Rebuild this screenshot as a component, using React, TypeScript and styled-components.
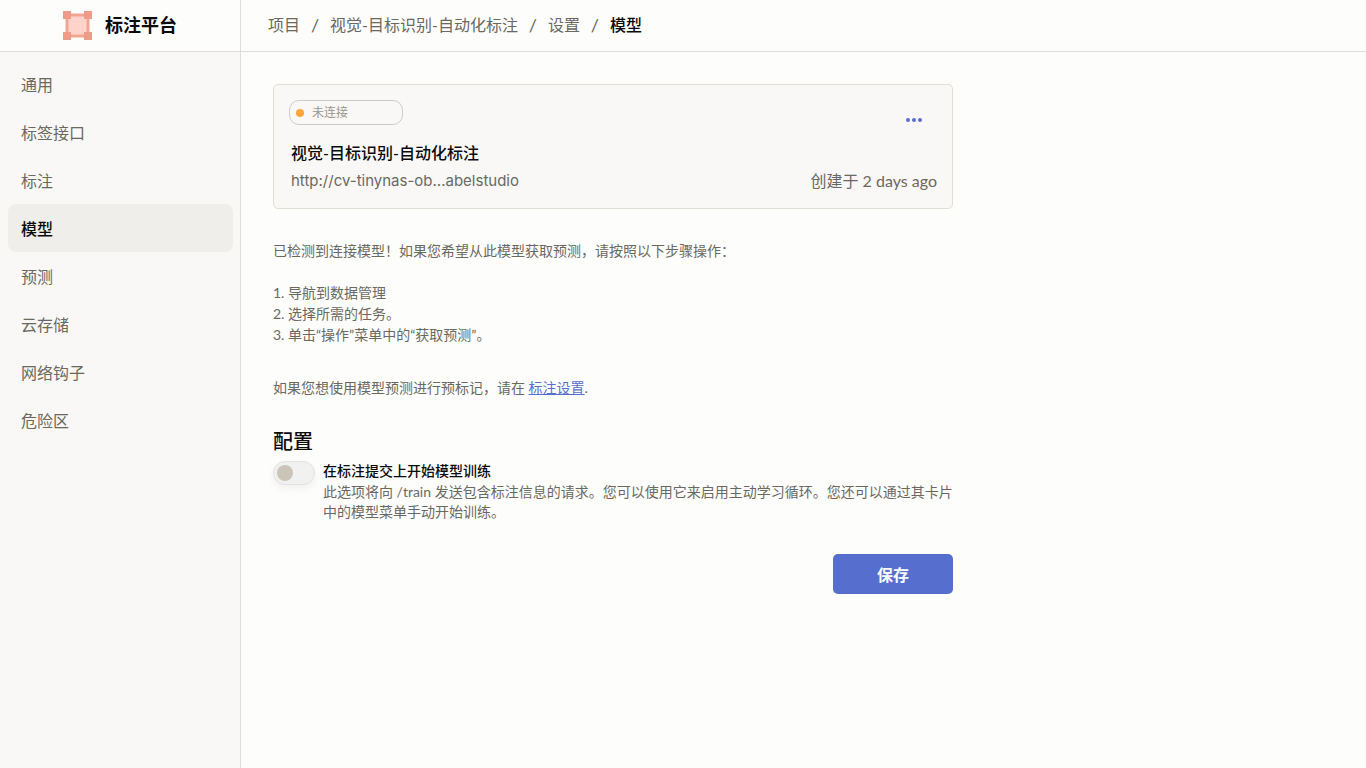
import React, { useState } from "react";
import styled, { createGlobalStyle } from "styled-components";

const ink = "#0b0a0a";
const muted = "#6b6860";
const line = "#dddddb";
const accent = "#566fcf";

const GlobalStyle = createGlobalStyle`
  *, *::before, *::after { box-sizing: border-box; }
  body {
    margin: 0;
    background: #fdfdfc;
    color: ${muted};
    font-family: Lato, "Noto Sans CJK SC", sans-serif;
    font-size: 16px;
    font-variant-ligatures: none;
    line-height: 24px;
  }
  button { font: inherit; }
`;

const Page = styled.div`
  display: flex;
  flex-direction: column;
  min-height: 100vh;
`;

const Header = styled.header`
  display: flex;
  height: 52px;
  border-bottom: 1px solid ${line};
`;

const Brand = styled.a`
  display: flex;
  align-items: center;
  justify-content: center;
  gap: 12px;
  width: 241px;
  flex: none;
  padding-bottom: 1px;
  border-right: 1px solid ${line};
  color: ${ink};
  font-size: 18px;
  font-weight: 700;
  text-decoration: none;
`;

const Breadcrumbs = styled.nav`
  display: flex;
  align-items: center;
  padding: 0 27px 2px;
`;

const Crumb = styled.a<{ $current?: boolean }>`
  color: ${(p) => (p.$current ? ink : muted)};
  font-weight: ${(p) => (p.$current ? 500 : 400)};
  text-decoration: none;
`;

const Slash = styled.span`
  width: 30px;
  font-size: 18px;
  text-align: center;
`;

const Body = styled.div`
  display: flex;
  flex: 1;
`;

const Sidebar = styled.nav`
  display: flex;
  flex-direction: column;
  width: 241px;
  flex: none;
  padding: 8px 7px 8px 8px;
  background: #f9f8f6;
  border-right: 1px solid ${line};
`;

const NavItem = styled.a<{ $active?: boolean }>`
  display: flex;
  align-items: center;
  height: 48px;
  padding: 2px 13px 0;
  border-radius: 8px;
  background: ${(p) => (p.$active ? "#efeeea" : "transparent")};
  color: ${(p) => (p.$active ? ink : muted)};
  font-weight: ${(p) => (p.$active ? 500 : 400)};
  text-decoration: none;
`;

const Main = styled.main`
  flex: 1;
  padding: 32px;
`;

const Content = styled.div`
  max-width: 680px;
`;

const Card = styled.section`
  padding: 15px;
  background: #f9f8f7;
  border: 1px solid #e1ded5;
  border-radius: 5px;
`;

const CardTop = styled.div`
  display: flex;
  justify-content: space-between;
  align-items: flex-start;
  height: 40px;
`;

const Status = styled.div`
  display: flex;
  align-items: center;
  gap: 8px;
  width: 114px;
  height: 25px;
  padding: 1px 6px 0;
  border: 1px solid #cccbc8;
  border-radius: 10px;
  color: #98968f;
  font-size: 12px;
`;

const Dot = styled.span`
  width: 8px;
  height: 8px;
  border-radius: 50%;
  background: #ffa53a;
`;

const MenuButton = styled.button`
  display: flex;
  align-items: center;
  justify-content: center;
  width: 46px;
  height: 40px;
  padding: 0;
  border: 0;
  background: none;
  color: ${accent};
`;

const CardTitle = styled.h2`
  margin: 0;
  padding: 0 2px;
  color: ${ink};
  font-size: 16px;
  font-weight: 500;
  line-height: 26px;
`;

const CardMeta = styled.div`
  display: flex;
  justify-content: space-between;
  padding: 3px 0 0 2px;
`;

const ModelUrl = styled.span`
  font-family: Inter, "Noto Sans CJK SC", sans-serif;
  font-size: 15px;
`;

const Copy = styled.div`
  margin-top: 31px;
  font-size: 14px;
  line-height: 21px;
`;

const Paragraph = styled.p`
  margin: 0;
`;

const Steps = styled.ol`
  margin: 21px 0 32px;
  padding: 0;
  list-style: none;
`;

const TextLink = styled.a`
  color: ${accent};
  text-decoration: underline;
`;

const SectionTitle = styled.h3`
  margin: 28px 0 4px;
  color: ${ink};
  font-size: 20px;
  font-weight: 500;
  line-height: 31px;
`;

const Option = styled.label`
  display: flex;
  align-items: flex-start;
  gap: 8px;
  font-size: 14px;
  line-height: 20px;
`;

const Toggle = styled.input`
  appearance: none;
  display: flex;
  align-items: center;
  flex: none;
  width: 42px;
  height: 24px;
  margin: 0;
  padding: 0 3px;
  border: 1px solid #e3e2e0;
  border-radius: 12px;
  background: #f1f1f1;
  box-shadow: 0 4px 8px rgba(0, 0, 0, 0.05);

  &::before {
    content: "";
    width: 16px;
    height: 16px;
    border-radius: 50%;
    background: #cbc5b8;
  }
  &:checked {
    justify-content: flex-end;
    background: ${accent};
  }
`;

const OptionText = styled.span`
  display: flex;
  flex-direction: column;
`;

const OptionTitle = styled.span`
  padding-bottom: 1px;
  color: ${ink};
  font-weight: 500;
`;

const Actions = styled.div`
  display: flex;
  justify-content: flex-end;
  margin-top: 32px;
`;

const SaveButton = styled.button`
  width: 120px;
  height: 40px;
  padding: 2px 0 0;
  border: 0;
  border-radius: 5px;
  background: ${accent};
  color: #fff;
  font-weight: 700;
`;

const navItems = ["通用", "标签接口", "标注", "模型", "预测", "云存储", "网络钩子", "危险区"];
const crumbs = ["项目", "视觉-目标识别-自动化标注", "设置", "模型"];

function Logo() {
  return (
    <svg width="30" height="30" viewBox="0 0 30 30" aria-hidden="true">
      <rect x="4" y="5" width="21" height="21" fill="#ffd3ca" stroke="#f3a593" strokeWidth="3" />
      <g fill="#ee9b87">
        <rect x="0" y="1" width="8" height="8" />
        <rect x="21" y="1" width="8" height="8" />
        <rect x="0" y="22" width="8" height="8" />
        <rect x="21" y="22" width="8" height="8" />
      </g>
    </svg>
  );
}

export default function App() {
  const [train, setTrain] = useState(false);
  return (
    <Page>
      <GlobalStyle />
      <Header>
        <Brand href="#">
          <Logo />
          标注平台
        </Brand>
        <Breadcrumbs>
          {crumbs.map((c, i) => (
            <React.Fragment key={c}>
              {i > 0 && <Slash>/</Slash>}
              <Crumb href="#" $current={i === crumbs.length - 1}>{c}</Crumb>
            </React.Fragment>
          ))}
        </Breadcrumbs>
      </Header>
      <Body>
        <Sidebar>
          {navItems.map((n) => (
            <NavItem key={n} href="#" $active={n === "模型"}>{n}</NavItem>
          ))}
        </Sidebar>
        <Main>
          <Content>
            <Card>
              <CardTop>
                <Status><Dot />未连接</Status>
                <MenuButton type="button" aria-label="菜单">
                  <svg width="18" height="4" viewBox="0 0 18 4" fill="currentColor">
                    <circle cx="3" cy="2" r="2" />
                    <circle cx="9" cy="2" r="2" />
                    <circle cx="15" cy="2" r="2" />
                  </svg>
                </MenuButton>
              </CardTop>
              <CardTitle>视觉-目标识别-自动化标注</CardTitle>
              <CardMeta>
                <ModelUrl>http://cv-tinynas-ob...abelstudio</ModelUrl>
                <span>创建于 2 days ago</span>
              </CardMeta>
            </Card>
            <Copy>
              <Paragraph>已检测到连接模型！如果您希望从此模型获取预测，请按照以下步骤操作：</Paragraph>
              <Steps>
                <li>1. 导航到数据管理</li>
                <li>2. 选择所需的任务。</li>
                <li>3. 单击“操作”菜单中的“获取预测”。</li>
              </Steps>
              <Paragraph>
                如果您想使用模型预测进行预标记，请在 <TextLink href="#">标注设置</TextLink>.
              </Paragraph>
            </Copy>
            <SectionTitle>配置</SectionTitle>
            <Option>
              <Toggle type="checkbox" checked={train} onChange={(e) => setTrain(e.target.checked)} />
              <OptionText>
                <OptionTitle>在标注提交上开始模型训练</OptionTitle>
                <span>
                  此选项将向 /train 发送包含标注信息的请求。您可以使用它来启用主动学习循环。您还可以通过其卡片中的模型菜单手动开始训练。
                </span>
              </OptionText>
            </Option>
            <Actions>
              <SaveButton type="button">保存</SaveButton>
            </Actions>
          </Content>
        </Main>
      </Body>
    </Page>
  );
}
